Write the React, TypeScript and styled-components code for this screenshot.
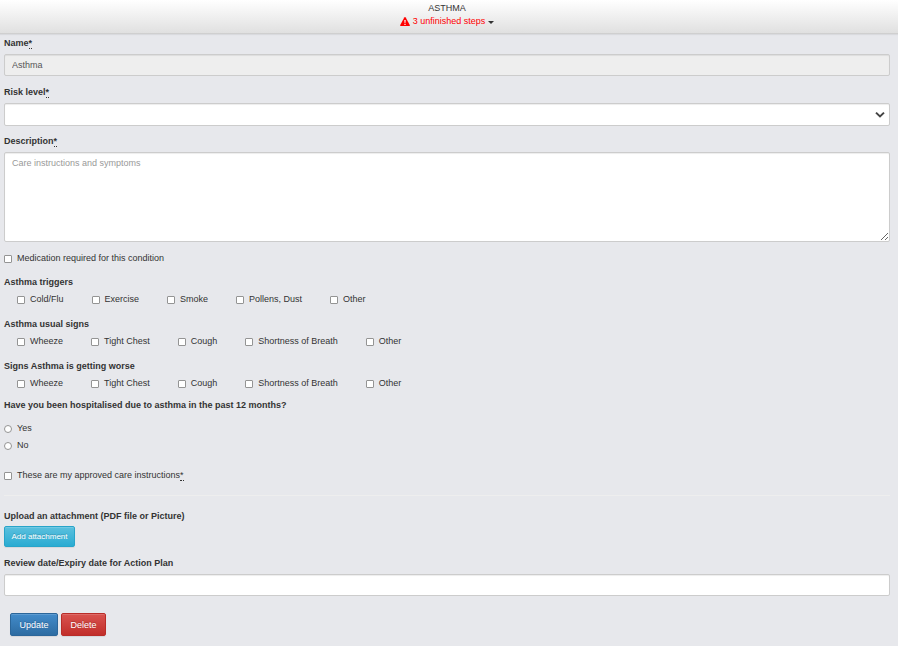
import React from "react";
import styled, { createGlobalStyle, css } from "styled-components";

const GlobalStyle = createGlobalStyle`
  *, *::before, *::after { box-sizing: border-box; }
  body {
    margin: 0;
    background: #e7e8ec;
    color: #333;
    font-family: "Liberation Sans", Arial, sans-serif;
    font-size: 9px;
    line-height: 12px;
  }
`;

const Header = styled.header`
  display: flex;
  flex-direction: column;
  align-items: center;
  gap: 1px;
  padding: 2px 4px 6px 0;
  background: linear-gradient(#ffffff, #e0e0e0);
  border-bottom: 1px solid #cfcfcf;
  box-shadow: 0 1px 1px rgba(0, 0, 0, 0.06);
`;

const Title = styled.h1`
  margin: 0;
  font-size: 9px;
  font-weight: 400;
`;

const StepsButton = styled.button`
  display: flex;
  align-items: center;
  gap: 3px;
  padding: 0;
  border: 0;
  background: none;
  color: #f00;
  font: inherit;
  cursor: pointer;
`;

const Caret = styled.span`
  margin-top: 2px;
  border-top: 3px solid #333;
  border-left: 3px solid transparent;
  border-right: 3px solid transparent;
`;

const Form = styled.form`
  display: flex;
  flex-direction: column;
  padding: 3px 8px 10px 4px;
`;

const Field = styled.div<{ $after?: number; $gap?: number }>`
  display: flex;
  flex-direction: column;
  gap: ${(p) => p.$gap ?? 5}px;
  margin-bottom: ${(p) => p.$after ?? 10}px;
`;

const Label = styled.label`
  align-self: flex-start;
  font-weight: 700;
`;

const Required = styled.abbr`
  text-decoration: none;
  border-bottom: 1px dotted #333;
`;

const control = css`
  display: block;
  width: 100%;
  border: 1px solid #ccc;
  border-radius: 2px;
  background: #fff;
  box-shadow: inset 0 1px 1px rgba(0, 0, 0, 0.075);
  color: #555;
  font: inherit;
  outline: none;
`;

const TextInput = styled.input`
  ${control}
  height: 22px;
  padding: 0 7px;
  &:disabled { background: #eee; }
`;

const SelectWrap = styled.div`
  display: grid;
  align-items: center;
  > * { grid-area: 1 / 1; }
  > svg { justify-self: end; margin-right: 5px; pointer-events: none; }
`;

const Select = styled.select`
  ${control}
  height: 23px;
  padding: 0 20px 0 7px;
  appearance: none;
`;

const TextArea = styled.textarea`
  ${control}
  height: 90px;
  padding: 4px 7px;
  resize: vertical;
  &::placeholder { color: #999; opacity: 1; }
`;

const Fieldset = styled.fieldset<{ $after: number }>`
  min-width: 0;
  margin: 0 0 ${(p) => p.$after}px;
  padding: 0;
  border: 0;
`;

const Legend = styled.legend`
  padding: 0;
  font-weight: 700;
`;

const Options = styled.div`
  display: flex;
  flex-wrap: wrap;
  gap: 4px 28px;
  padding: 5px 0 0 13px;
`;

const RadioList = styled.div`
  display: flex;
  flex-direction: column;
  gap: 5px;
  padding-top: 11px;
`;

const Choice = styled.label<{ $after?: number }>`
  display: flex;
  align-items: center;
  align-self: flex-start;
  gap: 5px;
  margin-bottom: ${(p) => p.$after ?? 0}px;
`;

const Tick = styled.input`
  appearance: none;
  flex: none;
  width: 8px;
  height: 8px;
  margin: 2px 0 0;
  border: 1px solid #949494;
  border-radius: ${(p) => (p.type === "radio" ? "50%" : "1px")};
  background: #fff;
  &:checked { background: #2d6ca2; box-shadow: inset 0 0 0 1px #fff; }
`;

const Divider = styled.hr`
  width: 100%;
  margin: 0 0 14px;
  border: 0;
  border-top: 1px solid #eee;
`;

const tones = {
  info: ["#5bc0de", "#2aabd2", "#28a4c9"],
  primary: ["#428bca", "#2d6ca2", "#2b669a"],
  danger: ["#d9534f", "#c12e2a", "#b92c28"],
};

const Button = styled.button<{ $tone: keyof typeof tones; $minWidth: number; $small?: boolean }>`
  align-self: flex-start;
  min-width: ${(p) => p.$minWidth}px;
  height: ${(p) => (p.$small ? 21 : 23)}px;
  padding: 0 ${(p) => (p.$small ? 6 : 8)}px;
  border: 1px solid ${(p) => tones[p.$tone][2]};
  border-radius: 2px;
  background: linear-gradient(${(p) => tones[p.$tone][0]}, ${(p) => tones[p.$tone][1]});
  box-shadow: inset 0 1px 0 rgba(255, 255, 255, 0.15), 0 1px 1px rgba(0, 0, 0, 0.075);
  color: #fff;
  font: inherit;
  font-size: ${(p) => (p.$small ? 8 : 9)}px;
  text-shadow: 0 -1px 0 rgba(0, 0, 0, 0.2);
  cursor: pointer;
`;

const Actions = styled.div`
  display: flex;
  gap: 3px;
  padding-left: 6px;
`;

const Star = () => <Required title="required">*</Required>;

const WarningIcon = () => (
  <svg width="10" height="9" viewBox="0 0 10 9" aria-hidden="true">
    <path d="M5 0 Q5.4 0 5.7 0.5 L9.9 8.2 Q10 9 9.4 9 H0.6 Q0 9 0.1 8.2 L4.3 0.5 Q4.6 0 5 0 Z" fill="#f00" />
    <path d="M4.3 3 H5.7 L5.4 6 H4.6 Z M4.4 6.7 H5.6 V7.9 H4.4 Z" fill="#fff" />
  </svg>
);

const ChevronIcon = () => (
  <svg width="10" height="8" viewBox="0 0 10 8" fill="none" aria-hidden="true">
    <path d="M1 1.6 L5 5.4 L9 1.6" stroke="#444" strokeWidth="2" />
  </svg>
);

function CheckGroup({ name, legend, options, after }: { name: string; legend: string; options: string[]; after: number }) {
  return (
    <Fieldset $after={after}>
      <Legend>{legend}</Legend>
      <Options>
        {options.map((option) => (
          <Choice key={option}>
            <Tick type="checkbox" name={name} value={option} />
            {option}
          </Choice>
        ))}
      </Options>
    </Fieldset>
  );
}

const triggers = ["Cold/Flu", "Exercise", "Smoke", "Pollens, Dust", "Other"];
const signs = ["Wheeze", "Tight Chest", "Cough", "Shortness of Breath", "Other"];

export default function App() {
  return (
    <>
      <GlobalStyle />
      <Header>
        <Title>ASTHMA</Title>
        <StepsButton type="button">
          <WarningIcon />
          3 unfinished steps
          <Caret />
        </StepsButton>
      </Header>
      <Form onSubmit={(e) => e.preventDefault()}>
        <Field>
          <Label htmlFor="name">Name<Star /></Label>
          <TextInput id="name" defaultValue="Asthma" disabled />
        </Field>
        <Field $after={9}>
          <Label htmlFor="risk">Risk level<Star /></Label>
          <SelectWrap>
            <Select id="risk" defaultValue="">
              <option value="" />
            </Select>
            <ChevronIcon />
          </SelectWrap>
        </Field>
        <Field>
          <Label htmlFor="description">Description<Star /></Label>
          <TextArea id="description" placeholder="Care instructions and symptoms" />
        </Field>
        <Choice $after={12}>
          <Tick type="checkbox" name="medication" />
          Medication required for this condition
        </Choice>
        <CheckGroup name="triggers" legend="Asthma triggers" options={triggers} after={13} />
        <CheckGroup name="signs" legend="Asthma usual signs" options={signs} after={13} />
        <CheckGroup name="worse" legend="Signs Asthma is getting worse" options={signs} after={10} />
        <Fieldset $after={18}>
          <Legend>Have you been hospitalised due to asthma in the past 12 months?</Legend>
          <RadioList>
            <Choice><Tick type="radio" name="hospitalised" value="yes" />Yes</Choice>
            <Choice><Tick type="radio" name="hospitalised" value="no" />No</Choice>
          </RadioList>
        </Fieldset>
        <Choice $after={14}>
          <Tick type="checkbox" name="approved" />
          <span>These are my approved care instructions<Star /></span>
        </Choice>
        <Divider />
        <Field $gap={4}>
          <Label as="span" id="upload">Upload an attachment (PDF file or Picture)</Label>
          <Button type="button" $tone="info" $minWidth={71} $small aria-describedby="upload">Add attachment</Button>
        </Field>
        <Field $after={17}>
          <Label htmlFor="review">Review date/Expiry date for Action Plan</Label>
          <TextInput id="review" />
        </Field>
        <Actions>
          <Button type="submit" $tone="primary" $minWidth={48}>Update</Button>
          <Button type="button" $tone="danger" $minWidth={45}>Delete</Button>
        </Actions>
      </Form>
    </>
  );
}
